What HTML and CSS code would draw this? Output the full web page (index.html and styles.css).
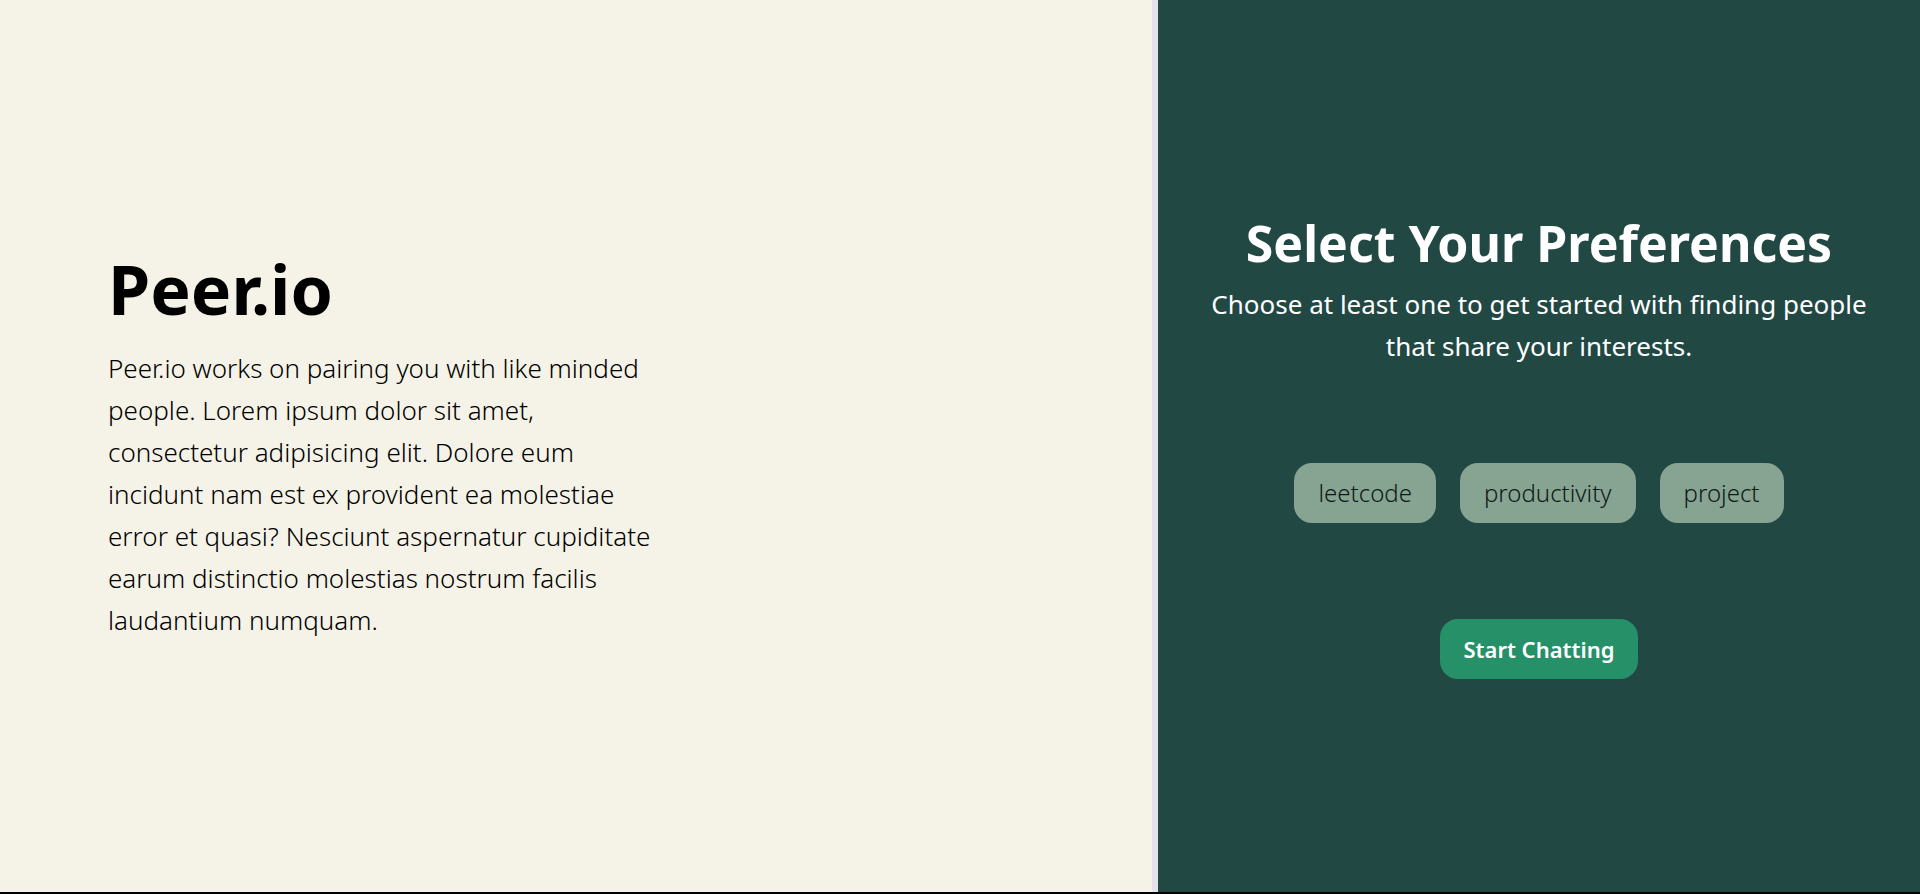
FILE: index.html
```
<!DOCTYPE html>
<html lang="en">
<head>
<meta charset="utf-8">
<meta name="viewport" content="width=device-width, initial-scale=1">
<title>Peer.io</title>
<link rel="stylesheet" href="styles.css">
</head>
<body>
<main class="page">
  <section class="intro">
    <h1 class="brand">Peer.io</h1>
    <p class="lead">Peer.io works on pairing you with like minded people. Lorem ipsum dolor sit amet, consectetur adipisicing elit. Dolore eum incidunt nam est ex provident ea molestiae error et quasi? Nesciunt aspernatur cupiditate earum distinctio molestias nostrum facilis laudantium numquam.</p>
  </section>
  <section class="preferences">
    <h2 class="title">Select Your Preferences</h2>
    <p class="hint">Choose at least one to get started with finding people that share your interests.</p>
    <div class="chips">
      <button class="button chip" type="button">leetcode</button>
      <button class="button chip" type="button">productivity</button>
      <button class="button chip" type="button">project</button>
    </div>
    <button class="button start" type="button">Start Chatting</button>
  </section>
</main>
</body>
</html>
```
FILE: styles.css
```
* { box-sizing: border-box; }
body {
  margin: 0;
  font-family: "Segoe UI", "Noto Sans", "Open Sans", sans-serif;
  color: #000;
}
.page {
  display: grid;
  grid-template-columns: 3fr 2fr;
  min-height: 100vh;
  border-bottom: 2px solid #000;
}
.intro {
  display: flex;
  flex-direction: column;
  justify-content: center;
  gap: 20px;
  padding: 24px 108px;
  background: #f5f3e7;
}
.brand, .title, .lead, .hint { margin: 0; }
.brand { font-size: 68px; line-height: 76px; font-weight: 700; }
.lead {
  max-width: 560px;
  font-size: 26px;
  line-height: 42px;
  font-weight: 300;
}
.preferences {
  display: flex;
  flex-direction: column;
  align-items: center;
  justify-content: center;
  padding: 24px 48px;
  border-left: 6px solid #e2e4ea;
  background: #224844;
  color: #fff;
  text-align: center;
}
.title { font-size: 50px; line-height: 60px; font-weight: 700; }
.hint {
  max-width: 680px;
  margin-top: 10px;
  font-size: 26px;
  line-height: 42px;
}
.chips {
  display: flex;
  flex-wrap: wrap;
  justify-content: center;
  gap: 24px;
  margin: 96px 0;
}
.button {
  min-height: 60px;
  padding: 12px 24px;
  border: 0;
  border-radius: 18px;
  font: inherit;
  line-height: 36px;
  cursor: pointer;
}
.chip { background: #87a493; color: #0d1a17; font-size: 24px; font-weight: 300; }
.start { background: #269068; color: #fff; font-size: 22px; font-weight: 600; }
```
